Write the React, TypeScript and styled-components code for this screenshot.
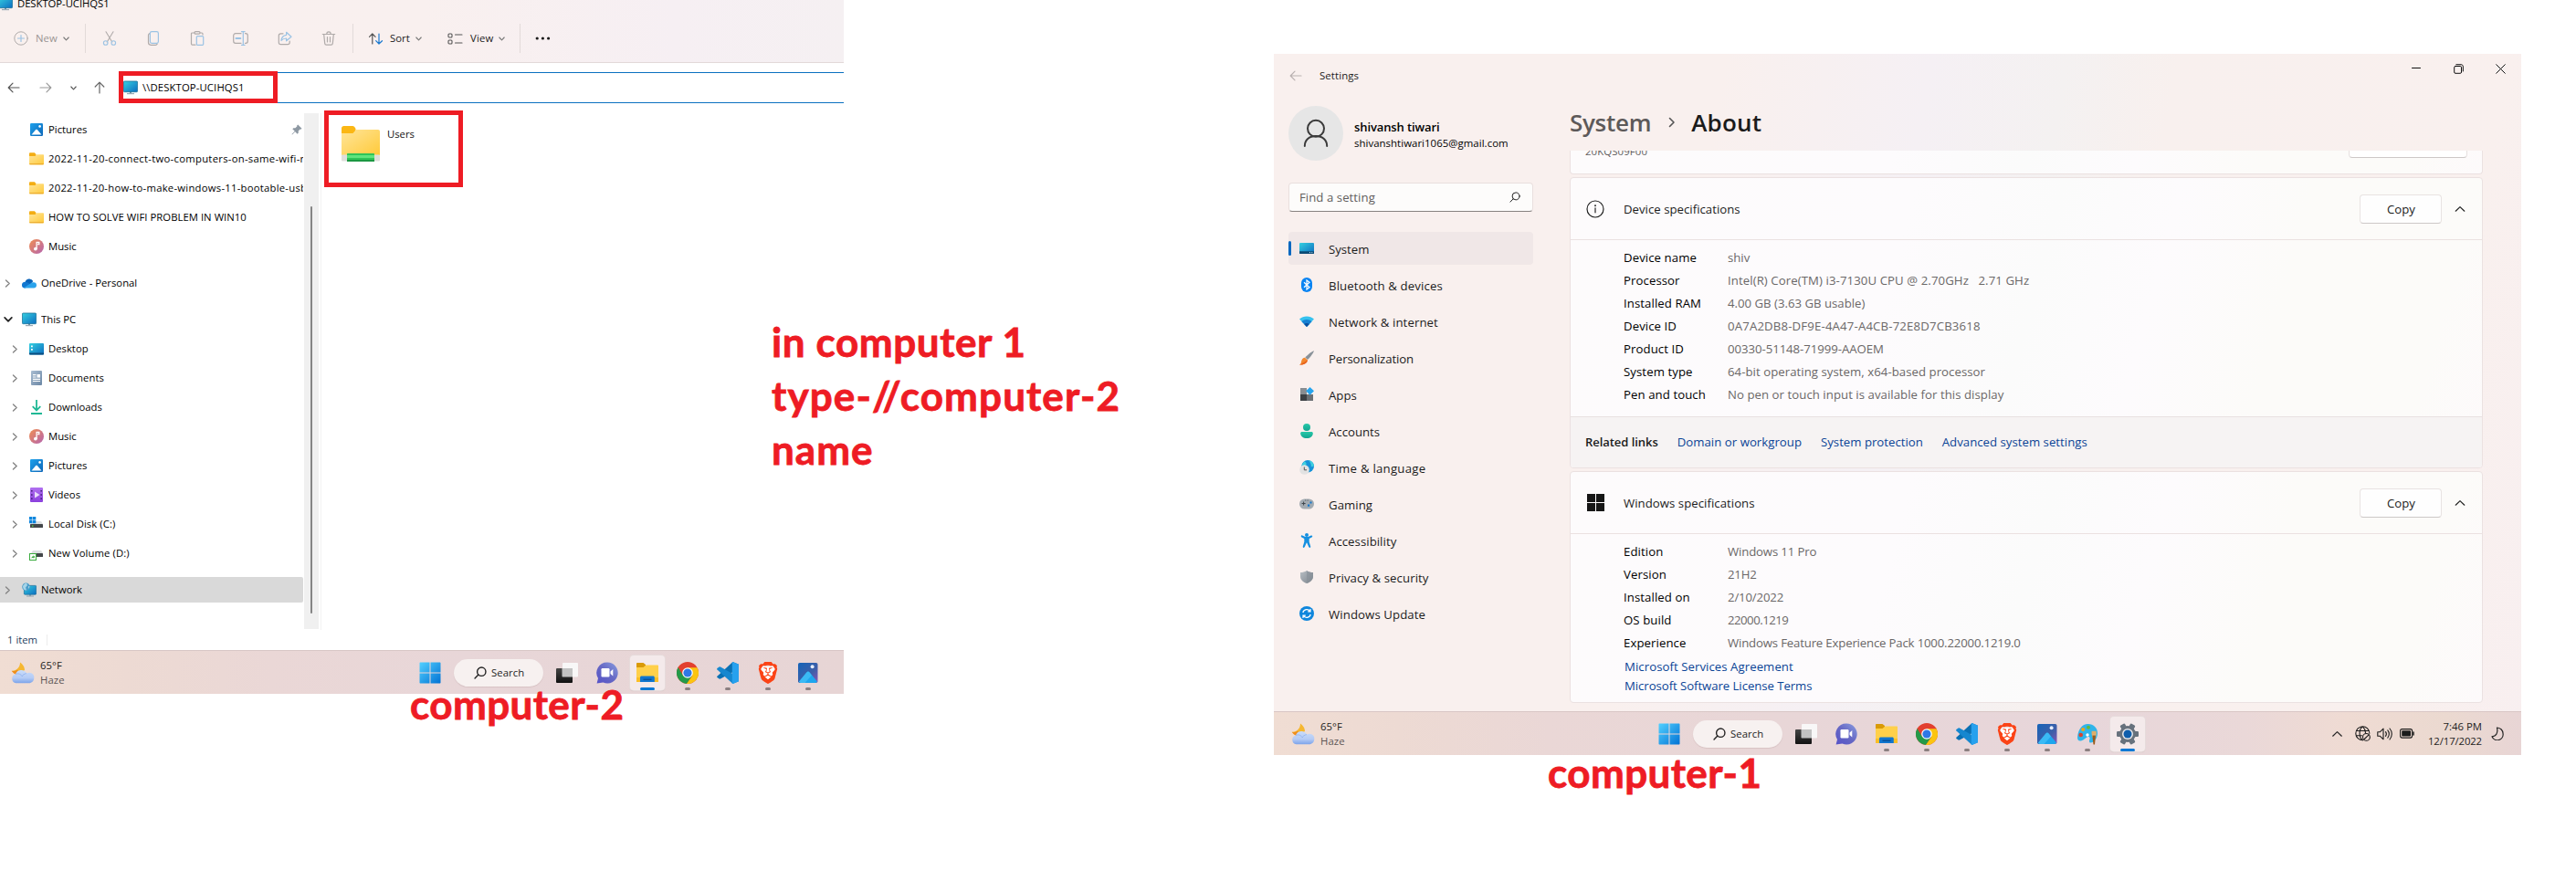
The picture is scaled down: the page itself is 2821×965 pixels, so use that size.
import React from "react";
import styled, { createGlobalStyle } from "styled-components";
import { SiBrave } from "react-icons/si";

const Global = createGlobalStyle`
  *, *::before, *::after { box-sizing: border-box; }
  body { margin: 0; background: #fff; overflow: hidden; }
`;

const Page = styled.main`
  position: relative;
  display: flex;
  align-items: flex-start;
  width: 2821px;
  height: 965px;
  overflow: hidden;
  background: #fff;
  font-family: "Open Sans", "Noto Sans", sans-serif;
  font-size: 11.3px;
  line-height: 16px;
  color: #000;
`;

const Label = styled.span<{ $ls?: number; $color?: string; $ml?: number }>`
  white-space: pre;
  letter-spacing: ${(p) => p.$ls ?? 0}px;
  color: ${(p) => p.$color ?? "inherit"};
  margin-left: ${(p) => p.$ml ?? 0}px;
`;

const Slot = styled.span<{ $w: number; $ml?: number }>`
  display: flex;
  flex: none;
  justify-content: center;
  align-items: center;
  width: ${(p) => p.$w}px;
  margin-left: ${(p) => p.$ml ?? 0}px;
  svg { display: block; flex: none; }
`;

/* ---------- line glyphs ---------- */

type GlyphProps = { w: number; h?: number; box?: string; color?: string; sw?: number; children: React.ReactNode };
function Glyph({ w, h = w, box, color = "#1b1b1b", sw = 1, children }: GlyphProps) {
  return (
    <svg width={w} height={h} viewBox={box ?? `0 0 ${w} ${h}`} fill="none" stroke={color} strokeWidth={sw} strokeLinecap="round" strokeLinejoin="round">
      {children}
    </svg>
  );
}
const ChevronDown = ({ color = "#777", sw = 1.1, s = 7 }) => (
  <Glyph w={s} h={s} box="0 0 7 7" color={color} sw={sw}><path d="M.8 2 3.5 4.8 6.2 2" /></Glyph>
);
const ChevronRight = () => <Glyph w={7} h={9} color="#858585" sw={1.4}><path d="M1.5 1 5.2 4.5 1.5 8" /></Glyph>;
const ChevronUp = ({ w = 12 }) => <Glyph w={w} h={8} box="0 0 12 8" color="#222" sw={1.2}><path d="M1.2 6.2 6 1.6l4.8 4.6" /></Glyph>;
const Arrow = ({ dir, color }: { dir: number; color: string }) => (
  <svg width="14" height="14" viewBox="0 0 14 14" fill="none" stroke={color} strokeWidth="1.2" strokeLinecap="round" strokeLinejoin="round">
    <g transform={`rotate(${dir} 7 7)`}><path d="M1.5 7h11.5M6 2.2 1.2 7 6 11.8" /></g>
  </svg>
);
const Magnifier = ({ s = 12, sw = 1 }) => (
  <Glyph w={s} box="0 0 12 12" color="#222" sw={sw}><circle cx="7.1" cy="4.9" r="4" /><path d="M4.2 7.8.9 11.1" /></Glyph>
);
const gray = "#b0abaa";
const blue = "#9cc3e4";
const CutIcon = () => (
  <Glyph w={16} color={gray} sw={1.1}><path d="M4 .8 10.8 12M12 .8 5.2 12" /><g stroke={blue}><circle cx="3.7" cy="13" r="2.3" /><circle cx="12.3" cy="13" r="2.3" /></g></Glyph>
);
const CopyIcon = () => (
  <Glyph w={16} color={gray} sw={1.2}><path d="M4 2.6c-1 .3-1.5 1-1.5 2v8c0 1.800 1 2.700 2.700 2.700h5c1 0 1.700-.4 2-1.300" /><rect x="4.400" y=".7" width="9" height="12.600" rx="1.800" stroke={blue} /></Glyph>
);
const PasteIcon = () => (
  <Glyph w={16} color={gray} sw={1.2}><path d="M5 2H2.600c-.7 0-1.100.4-1.100 1.100v11c0 .7.4 1.100 1.100 1.100H6M11 2h2c.7 0 1 .4 1 1.100V4" /><rect x="5" y=".7" width="6" height="2.400" rx="1.100" /><rect x="7.300" y="5.600" width="7.400" height="9.700" rx="1" stroke={blue} /></Glyph>
);
const RenameIcon = () => (
  <Glyph w={17} h={16} color={gray} sw={1.2}><path d="M9 2.700H3C1.600 2.700.7 3.600.7 5v6c0 1.400.9 2.300 2.300 2.300h6M13.500 2.700h.5c1.400 0 2.300.9 2.300 2.300v6c0 1.400-.9 2.300-2.300 2.300h-.5" /><path d="M11.300.8v14.400M9.500.7h3.600M9.500 15.300h3.600" stroke={blue} /><path d="M3.500 8h4.800" stroke={blue} strokeWidth="2" /></Glyph>
);
const ShareIcon = () => (
  <Glyph w={16} color={gray} sw={1.2}><path d="M6 2.800H3.500C2.200 2.800 1.300 3.700 1.300 5v7.500c0 1.300.9 2.200 2.200 2.200H11c1.300 0 2.200-.9 2.200-2.200V11" /><path d="M9.600 1.300 15 6.200l-5.400 4.600V8c-2.600 0-4.300.8-5.600 2.500.3-3.300 2.300-5.800 5.600-6.200z" stroke={blue} /></Glyph>
);
const TrashIcon = () => (
  <Glyph w={16} color={gray} sw={1.2}><path d="M1.300 3.500h13.400M5.800 3.300C5.800 1.800 6.700.8 8 .8s2.200 1 2.200 2.500M2.700 3.800l1 9.800c.1 1 .8 1.600 1.700 1.600h5.200c.9 0 1.600-.6 1.700-1.600l1-9.800M6.500 6.500v5.500M9.500 6.500v5.500" /></Glyph>
);
const SortIcon = () => (
  <Glyph w={17} h={13} color="#555" sw={1.2}><path d="M4.800 12V1M1.500 4.300 4.800 1l3.300 3.300" /><path d="M12 1v11M8.700 8.700 12 12l3.500-3.300" stroke="#1b7ad0" /></Glyph>
);
const ViewIcon = () => (
  <Glyph w={17} h={13} color="#555" sw={1.1}><rect x="1" y="1" width="4" height="4" rx="1" /><rect x="1" y="8" width="4" height="4" rx="1" /><path d="M8.500 2h7.500M8.500 11h7.500" /></Glyph>
);

/* ---------- coloured icons ---------- */

const Defs = () => (
  <svg width="0" height="0" style={{ position: "absolute" }} aria-hidden>
    <defs>
      <linearGradient id="screen" x1="0" y1="0" x2="1" y2="1"><stop offset="0" stopColor="#35d0e0" /><stop offset="1" stopColor="#0c6cc0" /></linearGradient>
      <linearGradient id="folder" x1="0" y1="0" x2="1" y2="1"><stop offset="0" stopColor="#ffe59a" /><stop offset="1" stopColor="#ffca3a" /></linearGradient>
      <linearGradient id="sky" x1="0" y1="0" x2="1" y2="1"><stop offset="0" stopColor="#1fa2ec" /><stop offset="1" stopColor="#0c66b8" /></linearGradient>
      <linearGradient id="win" x1="0" y1="0" x2="1" y2="1"><stop offset="0" stopColor="#52d0ff" /><stop offset="1" stopColor="#0272d4" /></linearGradient>
      <linearGradient id="music" x1="0" y1="0" x2="1" y2="1"><stop offset="0" stopColor="#f08e50" /><stop offset="1" stopColor="#b565b0" /></linearGradient>
      <linearGradient id="violet" x1="0" y1="0" x2="0" y2="1"><stop offset="0" stopColor="#b070f0" /><stop offset="1" stopColor="#8a3fdc" /></linearGradient>
      <linearGradient id="doc" x1="0" y1="0" x2="1" y2="1"><stop offset="0" stopColor="#a9bdd2" /><stop offset="1" stopColor="#6b87a5" /></linearGradient>
      <linearGradient id="teal" x1="0" y1="0" x2="0" y2="1"><stop offset="0" stopColor="#28c8a8" /><stop offset="1" stopColor="#12a590" /></linearGradient>
      <linearGradient id="steel" x1="0" y1="0" x2="1" y2="1"><stop offset="0" stopColor="#b9bfc5" /><stop offset="1" stopColor="#7c848c" /></linearGradient>
      <linearGradient id="chat" x1="1" y1="0" x2="0" y2="1"><stop offset="0" stopColor="#8a9de0" /><stop offset=".5" stopColor="#6668c4" /><stop offset="1" stopColor="#5552c8" /></linearGradient>
      <linearGradient id="photo" x1="0" y1="0" x2="1" y2="1"><stop offset="0" stopColor="#1464b8" /><stop offset=".6" stopColor="#3f5ea8" /><stop offset="1" stopColor="#8a55b8" /></linearGradient>
      <linearGradient id="dark" x1="0" y1="0" x2="0" y2="1"><stop offset="0" stopColor="#454545" /><stop offset="1" stopColor="#111" /></linearGradient>
      <linearGradient id="cloud" x1="0" y1="0" x2="0" y2="1"><stop offset="0" stopColor="#c9dcfa" /><stop offset=".6" stopColor="#b4cbf5" /><stop offset="1" stopColor="#7ba3ea" /></linearGradient>
    </defs>
  </svg>
);
const Monitor = () => (
  <svg width="16" height="16" viewBox="0 0 16 16"><path d="M7 12h2v2H7z" fill="#8295a5" /><path d="M4 14h8v1.200H4z" fill="#9aaab5" /><rect x=".4" y="1" width="15.200" height="11.700" rx="1" fill="url(#screen)" stroke="#1c7197" strokeWidth=".8" /></svg>
);
const PicturesIcon = () => (
  <svg width="16" height="16" viewBox="0 0 16 16"><rect x="1" y="1" width="14" height="14" rx="1.200" fill="url(#sky)" /><path d="M2.500 13.500 7 8.300c.6-.6 1.400-.6 2 0l4.500 5.200z" fill="#fff" /><circle cx="11.600" cy="4.400" r="1.300" fill="#fff" /></svg>
);
const FolderIcon = () => (
  <svg width="16" height="14" viewBox="0 0 16 14"><path d="M0 1.500C0 .7.500.3 1.200.3h4.600l1.700 1.600V5H0z" fill="#f3ad13" /><path d="M0 4h6.500l1.500-1.700h7c.6 0 1 .4 1 1v9.200c0 .5-.4.900-1 .9H1c-.6 0-1-.4-1-.9z" fill="url(#folder)" /><path d="M.3 12.700h15.400" stroke="#e5a224" strokeWidth=".9" /></svg>
);
const MusicIcon = () => (
  <svg width="16" height="16" viewBox="0 0 16 16"><circle cx="8" cy="8" r="8" fill="url(#music)" /><circle cx="6.900" cy="10.600" r="1.900" fill="#fff" /><path d="M8.100 10.600V3.400h2.700v2.100H9.200" fill="none" stroke="#fff" strokeWidth="1.300" /></svg>
);
const OneDriveIcon = () => (
  <svg width="16" height="12" viewBox="0 0 16 12"><path d="M3.500 5.500A4.700 4.700 0 0 1 12.300 4L8 9z" fill="#0a63b8" /><path d="M0 8.200A3.300 3.300 0 0 1 3.800 4.700C5.500 4.700 7 6 9 7l-5 4.400H3.200A3.200 3.200 0 0 1 0 8.200z" fill="#1177d0" /><path d="M2 11.200 11 5.500c.5-.2 1-.3 1.600-.3A3.300 3.300 0 0 1 16 8.400c0 1.700-1.300 3-3 3H3.300c-.5 0-.9 0-1.300-.2z" fill="#2aa3ec" /></svg>
);
const DesktopIcon = () => (
  <svg width="16" height="13" viewBox="0 0 16 13"><rect width="16" height="12.400" rx="1" fill="url(#screen)" /><path d="M0 10.500h16v1c0 .6-.4 1-1 1H1c-.6 0-1-.4-1-1z" fill="#0c4f80" /><path d="M2 2.500h1.800v1.800H2zM2 6h1.800v1.800H2z" fill="#fff" /></svg>
);
const DocumentsIcon = () => (
  <svg width="16" height="16" viewBox="0 0 16 16"><rect x="2" width="12" height="16" rx="1" fill="url(#doc)" /><path d="M4 4.600h3.500M4 7h3.500M4 9.400h8M4 11.500h8" stroke="#fff" strokeWidth="1.100" /><rect x="8.500" y="4" width="3.500" height="3.600" fill="#fff" /></svg>
);
const DownloadsIcon = () => (
  <svg width="16" height="16" viewBox="0 0 16 16" fill="none" stroke="#1fb895" strokeWidth="1.800"><path d="M8 0v11M3.700 7.200 8 11.500l4.300-4.300M2 15h12" /></svg>
);
const VideosIcon = () => (
  <svg width="16" height="16" viewBox="0 0 16 16"><rect x="1" width="14" height="16" rx="1" fill="url(#violet)" /><path d="M2 3h1.600v1.600H2zM2 7.200h1.600v1.600H2zM2 11.400h1.600V13H2zM12.400 3H14v1.600h-1.600zM12.400 7.200H14v1.600h-1.600zM12.400 11.400H14V13h-1.600z" fill="#43207a" /><path d="m6 4.500 5.500 3.500L6 11.500z" fill="#eadcfa" /></svg>
);
const DiskIcon = ({ win }: { win?: boolean }) => (
  <svg width="16" height="16" viewBox="0 0 16 16">
    <path d="M4 5h9l2 3H2z" fill="#dcdfe0" /><rect x="1" y="8" width="14" height="4" rx=".6" fill="#43474a" />
    {win ? <><path d="M0 0h3.400v3.400H0zM3.900 0h3.400v3.400H3.900zM0 3.900h3.400v3.400H0zM3.900 3.900h3.400v3.400H3.900z" fill="#0f86dd" /><rect x="3" y="9.500" width="1.500" height="1.300" fill="#59e04f" /></>
      : <><rect x=".5" y="8.500" width="7" height="7" fill="#fff" stroke="#3bab3f" /><path d="m2.200 13.500 1-2h1.300v-1.200L6.400 12l-1.900 1.700v-1z" fill="#3bab3f" /></>}
  </svg>
);
const NetworkIcon = () => (
  <svg width="16" height="16" viewBox="0 0 16 16"><path d="M8 12.500h2v2H8zM5 14.500h8v1H5z" fill="#8ba0ae" /><rect x="2.400" y="3.400" width="13.200" height="9.800" rx=".8" fill="url(#screen)" stroke="#1c6f9b" strokeWidth=".7" /><circle cx="4.500" cy="4.700" r="4.300" fill="#4c9dc9" /><path d="M1 4c1-2 2.500-3.300 4-3.300L6 3 4 5.500l1 3C2.600 8.500 1 7 1 4zM7 4l1.700.6L7.200 7z" fill="#a8d5e8" /></svg>
);
const PinIcon = () => (
  <svg width="12" height="12" viewBox="0 0 12 12" fill="#8d98a2"><path d="m7.200.5 4.300 4.300-1 1-.8-.2-2 2 .1 2-1.100 1.100-2.500-2.500L1 11.500l-.5-.5 3.300-3.200L1.300 5.300l1.100-1.100 2 .1 2-2-.2-.8z" /></svg>
);
const SharedFolder = () => (
  <svg width="42" height="40" viewBox="0 0 42 40"><path d="M0 2.500C0 1 1 0 2.500 0h9.700c1.300 0 2.300 1 3.300 3v8H0z" fill="#fbb714" /><path d="M0 8h12.500l3.500-4h24c1.200 0 2 .8 2 2v26H0z" fill="url(#folder)" /><rect y="31.500" width="42" height="7" rx="1" fill="#dededb" /><rect x="6" y="30" width="30" height="9" rx=".5" fill="#2ec458" /><path d="M6 32h30v3H6z" fill="#5fe47d" /><path d="M6 38h30" stroke="#168a3b" strokeWidth="1.500" /></svg>
);

const StartIcon = () => (
  <svg width="24" height="24" viewBox="0 0 24 24"><path d="M.5 1.500c0-.6.3-1 1-1h10v11H.5zM12.500.5h10c.7 0 1 .4 1 1v10h-11zM.5 12.500h11v11h-10c-.7 0-1-.4-1-1zM12.500 12.500h11v10c0 .6-.3 1-1 1h-10z" fill="url(#win)" /></svg>
);
const TaskViewIcon = () => (
  <svg width="24" height="24" viewBox="0 0 24 24"><rect x="7" y="1" width="17" height="15.500" rx="1" fill="#f8f7f7" /><rect y="7" width="18" height="16" rx="1" fill="url(#dark)" /><path d="M6.500 7H18v9.500H7.500c-.6 0-1-.4-1-1z" fill="#c2c2c2" /></svg>
);
const ChatIcon = () => (
  <svg width="24" height="24" viewBox="0 0 24 24"><path d="M12 .5A11.500 11.500 0 1 1 7.500 22.500L.6 23.500 2 18A11.500 11.500 0 0 1 12 .5z" fill="url(#chat)" /><rect x="5.500" y="7" width="9" height="9.500" rx="1.200" fill="#fff" /><path d="M15.500 10.500 18.300 8v7.500l-2.800-2.500z" fill="#fff" /></svg>
);
const ExplorerIcon = () => (
  <svg width="26" height="24" viewBox="0 0 26 24"><path d="M1 2c0-.7.4-1 1-1h6.500l2.500 2v5H1z" fill="#d99a08" /><path d="M1 6h7.500l3-2.500H24c.6 0 1 .4 1 1V21c0 .6-.4 1-1 1H2c-.6 0-1-.4-1-1z" fill="#ffd04a" /><path d="M1 17h24v5H1z" fill="#fbbf27" /><path d="M5 22v-5c0-1 .6-1.600 1.600-1.600h12.600c1 0 1.600.6 1.600 1.600v5z" fill="#1176cf" /><path d="M8.500 19.300h9" stroke="#0b5199" strokeWidth="1.500" /></svg>
);
const ChromeIcon = () => (
  <svg width="24" height="24" viewBox="0 0 24 24"><circle cx="12" cy="12" r="12" fill="#e2402f" /><path d="M1.600 6a12 12 0 0 0 9.400 18l6-9H7z" fill="#249a49" /><path d="M12 6.300h10.500A12 12 0 0 1 11 24l6.300-9z" fill="#fbc410" /><circle cx="12" cy="12" r="5.800" fill="#fff" /><circle cx="12" cy="12" r="4.600" fill="#2e78e6" /></svg>
);
const CodeIcon = () => (
  <svg width="24" height="24" viewBox="0 0 24 24"><path d="M17.500 0 24 2.800v5L4 18.500l-1 .2-2.600-1.600c-.4-.4-.4-1 0-1.400z" fill="#0a70b3" /><path d="M17.500 24 24 21.200v-4.500L4 5.500l-1-.2L.4 7c-.4.400-.4 1 0 1.400z" fill="#1687cf" /><path d="M17.500 0 24 2.800v18.400L17.500 24l-.7-.4V.4z" fill="#27a1ee" /></svg>
);
const BraveIcon = () => (
  <svg width="22" height="24" viewBox="0 0 22 24"><path d="M4.500 5h13l1 7-3 7.500-4.500 3-4.500-3L3.500 12z" fill="#fff" /><g transform="translate(-1 0)"><SiBrave size={24} color="#fb4316" /></g></svg>
);
const PhotosIcon = () => (
  <svg width="22" height="24" viewBox="0 0 22 24"><rect y="1" width="21.500" height="22" rx="1.800" fill="url(#photo)" /><path d="M1 21.500 9.300 11.500c1.100-1.200 2.200-1.200 3.300 0l8.400 10c-.4.900-1 1.400-2 1.400H3c-1 0-1.700-.5-2-1.400z" fill="#1ea6ee" /><path d="M9.300 11.500c1.100-1.200 2.200-1.200 3.300 0l2.400 3-7.500 8.500H3c-1 0-1.700-.5-2-1.400z" fill="#4cc8fa" opacity=".6" /><circle cx="15.600" cy="5.200" r="2" fill="#e6edfa" /></svg>
);
const PaintIcon = () => (
  <svg width="24" height="24" viewBox="0 0 24 24"><path d="M12.500 1C19 1 23 5.500 23 11c0 6-4 10.500-7.500 10.500-2 0-1.700-2.500-1-4.200.5-1.600-.7-2.600-2.500-2.100-2.500.8-4 4-7.500 4.300-3 .3-3.800-2.200-3.300-5C2 7 6 1 12.500 1z" fill="#2fb4ea" /><circle cx="4.700" cy="13" r="2.300" fill="#d8442e" /><circle cx="7.200" cy="7" r="2.100" fill="#e8a51f" /><circle cx="13" cy="4.800" r="2" fill="#62bb3b" /><circle cx="12" cy="13" r="1.700" fill="#fff" /><path d="M17 10.500h4.500l-.3 5H17z" fill="#e2c38d" /><path d="M17.300 13.500h3.700L20 23.500h-1.500z" fill="#9a5b1c" /><path d="M16.600 8.800h5v4h-5z" fill="#dfae6a" /></svg>
);
const GearIcon = () => (
  <svg width="24" height="24" viewBox="0 0 24 24"><g fill="#67727d"><circle cx="12" cy="12" r="9" />{[30, 90, 150].map((a) => <rect key={a} x="9" y="0" width="6" height="24" rx="1.200" transform={`rotate(${a} 12 12)`} />)}</g><circle cx="12" cy="12" r="6" fill="#e9e7e8" /><circle cx="12" cy="12" r="4.500" fill="#0f5eac" /></svg>
);
const WeatherIcon = () => (
  <svg width="26" height="24" viewBox="0 0 26 24"><path d="M10 .5c2.500 2 5 4.500 5 8.500L8 13.500C4 13 2 11.500.8 9.700 6 10 10 6 10 .5z" fill="#f5b731" /><path d="M.8 9.700C3 10.300 5 10 7 8.500L9 12l-3 2c-2.500-1-4-2.500-5.200-4.300z" fill="#ef8e1e" /><path d="M5.500 23.300A5 5 0 0 1 5 13.500 6.500 6.500 0 0 1 17 12.600a5.400 5.400 0 0 1 8.300 5.200c-.3 3.200-2.400 5.500-5.800 5.500z" fill="url(#cloud)" /><path d="M5 13.500c3-1.500 6 0 7.500 2.500M17 12.600c-2.500.5-4 1.500-5 3.400" fill="none" stroke="#8fb0ec" strokeWidth=".8" /></svg>
);

/* ---------- taskbar ---------- */

const Bar = styled.footer<{ $pad: number; $bg: string }>`
  display: flex;
  flex: none;
  align-items: center;
  height: 48px;
  padding-left: ${(p) => p.$pad}px;
  border-top: 1px solid #d8c6c5;
  background: ${(p) => p.$bg};
  font-size: 11.3px;
`;
const Weather = styled.div<{ $w: number }>`
  display: flex;
  align-items: center;
  gap: 6px;
  width: ${(p) => p.$w}px;
`;
const Stack = styled.div<{ $right?: boolean }>`
  display: flex;
  flex-direction: column;
  align-items: ${(p) => (p.$right ? "flex-end" : "flex-start")};
  color: #1c1c1c;
`;
const SearchPill = styled.div`
  display: flex;
  align-items: center;
  gap: 5px;
  width: 98px;
  height: 30px;
  margin: 0 4px 0 14px;
  padding-left: 22px;
  border-radius: 15px;
  background: #f7f1f0;
  box-shadow: 0 1px 1px rgba(120, 90, 90, 0.15);
  color: #222;
`;
const TaskButton = styled.div<{ $active?: boolean }>`
  position: relative;
  display: flex;
  flex: none;
  align-items: center;
  justify-content: center;
  width: 38px;
  height: 38px;
  margin: 0 3px;
  border-radius: 4px;
  background: ${(p) => (p.$active ? "#f4eaeb" : "transparent")};
  box-shadow: ${(p) => (p.$active ? "0 0 0 1px #e6dbdb, 0 1px 1px #cbbcbc" : "none")};
`;
const Running = styled.i<{ $active?: boolean }>`
  position: absolute;
  left: 50%;
  bottom: 0;
  width: ${(p) => (p.$active ? 16 : 6)}px;
  height: 3px;
  border-radius: 2px;
  transform: translateX(-50%);
  background: ${(p) => (p.$active ? "#0a78d4" : "#8b7f80")};
`;
const Tray = styled.div`
  display: flex;
  align-items: center;
  margin-left: auto;
  padding-right: 19px;
`;

type Task = [React.FC, ("run" | "active")?];
function TaskGroup({ tasks }: { tasks: Task[] }) {
  return (
    <>
      <Slot $w={24}><StartIcon /></Slot>
      <SearchPill>
        <Magnifier s={14} sw={1.2} />
        <Label $ls={0.1}>Search</Label>
      </SearchPill>
      {tasks.map(([Icon, state], i) => (
        <TaskButton key={i} $active={state === "active"}>
          <Icon />
          {state && <Running $active={state === "active"} />}
        </TaskButton>
      ))}
    </>
  );
}
function WeatherWidget({ w }: { w: number }) {
  return (
    <Weather $w={w}>
      <WeatherIcon />
      <Stack><Label $ls={0.1}>65°F</Label><Label $color="#5d5655" $ls={0.1}>Haze</Label></Stack>
    </Weather>
  );
}

/* ---------- explorer window ---------- */

const Explorer = styled.section`
  display: flex;
  flex: none;
  flex-direction: column;
  width: 924px;
  height: 760px;
  overflow: hidden;
  background: #fff;
`;
const Ribbon = styled.header`
  height: 69px;
  flex: none;
  border-bottom: 1px solid #e2d9d9;
  background: linear-gradient(90deg, #f9f0ee 0%, #f9f0ef 50%, #f6eff3 80%, #f5f0f2 100%);
`;
const Caption = styled.div`
  display: flex;
  align-items: center;
  height: 23px;
  margin: -8px 0 0 -2px;
`;
const Commands = styled.div`
  display: flex;
  align-items: center;
  height: 54px;
  padding-left: 15px;
  color: #1b1b1b;
`;
const Divider = styled.i<{ $ml: number }>`
  width: 1px;
  height: 32px;
  margin-left: ${(p) => p.$ml}px;
  background: #e2dad9;
`;
const NavRow = styled.div`
  display: flex;
  flex: none;
  align-items: center;
  height: 55px;
  padding: 0 0 1px 8px;
`;
const Address = styled.div`
  display: flex;
  flex: 1;
  align-items: center;
  height: 34px;
  margin-left: 14px;
  padding-left: 5px;
  border: 1px solid #0a70c0;
  border-right: 0;
`;
const Panes = styled.div`
  display: flex;
  height: 566px;
  flex: none;
`;
const Tree = styled.nav`
  width: 332px;
  padding-top: 2px;
  overflow: hidden;
`;
const TreeRow = styled.div<{ $level: number; $gap?: boolean; $on?: boolean }>`
  display: flex;
  align-items: center;
  height: ${(p) => (p.$on ? 28 : 32)}px;
  margin-top: ${(p) => (p.$on ? 10 : p.$gap ? 8 : 0)}px;
  padding-left: ${(p) => (p.$level ? 12 : 4)}px;
  border-radius: 0 2px 2px 0;
  background: ${(p) => (p.$on ? "#d9d9d9" : "transparent")};
`;
const RowText = styled(Label)`
  flex: 1;
  overflow: hidden;
`;
const Track = styled.div`
  width: 16px;
  height: 565px;
  margin-left: 1px;
  padding: 102px 0 0 7px;
  background: #f0f0f0;
  &::before {
    content: "";
    display: block;
    width: 2px;
    height: 446px;
    border-radius: 1px;
    background: #858585;
  }
`;
const Files = styled.div`
  flex: 1;
  margin-left: 2px;
  padding: 14px 0 0 22px;
  border-left: 1px solid #f2f2f2;
`;
const FileTile = styled.div`
  display: flex;
  align-items: flex-start;
  gap: 8px;
  span { margin-top: 1px; }
`;
const StatusBar = styled.div`
  display: flex;
  align-items: center;
  height: 22px;
  padding-left: 8px;
  color: #24405e;
`;
const StatusMark = styled.i`
  width: 1px;
  height: 12px;
  margin-left: 10px;
  background: #ececec;
`;

type Row = { text: string; icon: React.FC; level?: number; exp?: "r" | "d"; gap?: boolean; on?: boolean; ls?: number; pin?: boolean };
const CDisk = () => <DiskIcon win />;
const DDisk = () => <DiskIcon />;
const rows: Row[] = [
  { text: "Pictures", icon: PicturesIcon, level: 1, pin: true },
  { text: "2022-11-20-connect-two-computers-on-same-wifi-n", icon: FolderIcon, level: 1, ls: 0.27 },
  { text: "2022-11-20-how-to-make-windows-11-bootable-usb", icon: FolderIcon, level: 1, ls: 0.24 },
  { text: "HOW TO SOLVE WIFI PROBLEM IN WIN10", icon: FolderIcon, level: 1, ls: 0.04 },
  { text: "Music", icon: MusicIcon, level: 1 },
  { text: "OneDrive - Personal", icon: OneDriveIcon, exp: "r", gap: true },
  { text: "This PC", icon: Monitor, exp: "d", gap: true },
  { text: "Desktop", icon: DesktopIcon, level: 1, exp: "r" },
  { text: "Documents", icon: DocumentsIcon, level: 1, exp: "r", ls: 0.05 },
  { text: "Downloads", icon: DownloadsIcon, level: 1, exp: "r" },
  { text: "Music", icon: MusicIcon, level: 1, exp: "r" },
  { text: "Pictures", icon: PicturesIcon, level: 1, exp: "r" },
  { text: "Videos", icon: VideosIcon, level: 1, exp: "r" },
  { text: "Local Disk (C:)", icon: CDisk, level: 1, exp: "r", ls: 0.08 },
  { text: "New Volume (D:)", icon: DDisk, level: 1, exp: "r", ls: 0.08 },
  { text: "Network", icon: NetworkIcon, exp: "r", on: true },
];

function ExplorerWindow() {
  return (
    <Explorer>
      <Ribbon>
        <Caption>
          <Slot $w={16}><Monitor /></Slot>
          <Label $ml={5} $ls={-0.05}>DESKTOP-UCIHQS1</Label>
        </Caption>
        <Commands>
          <Slot $w={16}><Glyph w={16} color={gray}><circle cx="8" cy="8" r="7.200" /><path d="M8 4.500v7M4.500 8h7" stroke={blue} strokeWidth="1.200" /></Glyph></Slot>
          <Label $ml={8} $color="#9a9493" $ls={0.1}>New</Label>
          <Slot $w={8} $ml={6}><ChevronDown /></Slot>
          <Divider $ml={16} />
          <Slot $w={16} $ml={18}><CutIcon /></Slot>
          <Slot $w={16} $ml={32}><CopyIcon /></Slot>
          <Slot $w={16} $ml={32}><PasteIcon /></Slot>
          <Slot $w={16} $ml={32}><RenameIcon /></Slot>
          <Slot $w={16} $ml={32}><ShareIcon /></Slot>
          <Slot $w={16} $ml={32}><TrashIcon /></Slot>
          <Divider $ml={18} />
          <Slot $w={17} $ml={16}><SortIcon /></Slot>
          <Label $ml={7} $ls={0.1}>Sort</Label>
          <Slot $w={8} $ml={6}><ChevronDown /></Slot>
          <Slot $w={17} $ml={27}><ViewIcon /></Slot>
          <Label $ml={8} $ls={0.2}>View</Label>
          <Slot $w={8} $ml={5}><ChevronDown /></Slot>
          <Divider $ml={16} />
          <Slot $w={18} $ml={15}><svg width="17" height="4" fill="#1b1b1b"><circle cx="2.200" cy="2" r="1.600" /><circle cx="8.400" cy="2" r="1.600" /><circle cx="14.600" cy="2" r="1.600" /></svg></Slot>
        </Commands>
      </Ribbon>
      <NavRow>
        <Slot $w={14}><Arrow dir={0} color="#555" /></Slot>
        <Slot $w={14} $ml={21}><Arrow dir={180} color="#9a9a9a" /></Slot>
        <Slot $w={8} $ml={19}><ChevronDown color="#555" /></Slot>
        <Slot $w={14} $ml={18}><Arrow dir={90} color="#666" /></Slot>
        <Address>
          <Slot $w={16} $ml={-1}><Monitor /></Slot>
          <Label $ml={5} $ls={0.12}>{"\\\\DESKTOP-UCIHQS1"}</Label>
        </Address>
      </NavRow>
      <Panes>
        <Tree>
          {rows.map((r, i) => {
            const Icon = r.icon;
            return (
              <TreeRow key={i} $level={r.level ?? 0} $gap={r.gap} $on={r.on}>
                <Slot $w={9}>{r.exp === "r" ? <ChevronRight /> : r.exp === "d" ? <ChevronDown color="#222" sw={1.2} s={10} /> : null}</Slot>
                <Slot $w={16} $ml={11}><Icon /></Slot>
                <RowText $ml={5} $ls={r.ls ?? 0}>{r.text}</RowText>
                {r.pin && <Slot $w={14}><PinIcon /></Slot>}
              </TreeRow>
            );
          })}
        </Tree>
        <Track />
        <Files>
          <FileTile><SharedFolder /><Label $color="#111">Users</Label></FileTile>
        </Files>
      </Panes>
      <StatusBar><Label>1 item</Label><StatusMark /></StatusBar>
      <Bar $pad={12} $bg="linear-gradient(90deg, #f0ddd3 0%, #eddad3 15%, #ead7d6 32%, #e8d6d8 55%, #e7d5d5 100%)">
        <WeatherWidget w={447} />
        <TaskGroup tasks={[[TaskViewIcon], [ChatIcon], [ExplorerIcon, "active"], [ChromeIcon, "run"], [CodeIcon, "run"], [BraveIcon, "run"], [PhotosIcon, "run"]]} />
      </Bar>
    </Explorer>
  );
}

/* ---------- settings window ---------- */

const Settings = styled.section`
  display: flex;
  flex: none;
  flex-direction: column;
  width: 1366px;
  height: 768px;
  margin: 59px 0 0 471px;
  overflow: hidden;
  background: linear-gradient(100deg, #f9f0ee 0%, #f9f0ee 33%, #f5f0f4 48%, #f4f1f1 58%, #f8f0ee 66%, #f9f0ee 90%, #f8eff0 100%);
  font-size: 13.2px;
  color: #1b1b1b;
`;
const TitleBar = styled.header`
  display: flex;
  flex: none;
  height: 48px;
  padding-left: 17px;
  font-size: 11.4px;
  align-items: center;
`;
const WindowControls = styled.div`
  display: flex;
  align-self: flex-start;
  align-items: center;
  height: 32px;
  margin-left: auto;
`;
const Body = styled.div`
  display: flex;
  height: 672px;
  flex: none;
`;
const Side = styled.aside`
  width: 284px;
  margin-left: 16px;
  padding-top: 9px;
`;
const Profile = styled.div`
  display: flex;
  align-items: center;
  gap: 12px;
  height: 60px;
`;
const Avatar = styled.div`
  display: flex;
  align-items: center;
  justify-content: center;
  width: 60px;
  height: 60px;
  border-radius: 50%;
  background: #e6e6e6;
`;
const ProfileText = styled.div`
  display: flex;
  flex-direction: column;
  gap: 2px;
  padding-top: 4px;
  color: #000;
  b { font-weight: 600; font-size: 13px; letter-spacing: -0.1px; }
  span { font-size: 11.4px; }
`;
const SearchBox = styled.div`
  display: flex;
  align-items: center;
  justify-content: space-between;
  width: 268px;
  height: 32px;
  margin: 24px 0 22px;
  padding: 0 13px 0 11px;
  border: 1px solid #e9dfde;
  border-bottom: 1px solid #888281;
  border-radius: 4px;
  background: #fdfcfb;
  color: #625e5d;
`;
const Item = styled.div<{ $on?: boolean }>`
  display: flex;
  align-items: center;
  width: 268px;
  height: 36px;
  margin-bottom: 4px;
  border-radius: 4px;
  background: ${(p) => (p.$on ? "#f0e7e7" : "transparent")};
  &::before {
    content: "";
    width: 3px;
    height: 16px;
    border-radius: 2px;
    background: ${(p) => (p.$on ? "#0067c0" : "transparent")};
  }
`;
const ItemText = styled(Label)`
  padding-top: 2px;
`;
const Main = styled.div`
  display: flex;
  flex-direction: column;
  width: 1000px;
  margin-left: 24px;
`;
const Crumbs = styled.h1`
  display: flex;
  align-items: center;
  height: 58px;
  margin: 0;
  padding-bottom: 5px;
  font-size: 26px;
  line-height: 36px;
  font-weight: 600;
`;
const Scroller = styled.div`
  display: flex;
  flex-direction: column;
  justify-content: flex-start;
  height: 614px;
  overflow: hidden;
`;
const Card = styled.article<{ $h: number; $cut?: boolean }>`
  flex: none;
  height: ${(p) => p.$h}px;
  margin-bottom: 3px;
  border: 1px solid #ebe1e1;
  border-top-width: ${(p) => (p.$cut ? 0 : 1)}px;
  border-radius: ${(p) => (p.$cut ? "0 0 4px 4px" : "4px")};
  background: linear-gradient(105deg, #fdfbfc 0%, #fdfbfd 35%, #fbfbfb 50%, #fdfbfd 62%, #fcfbf9 75%, #fcfbf9 92%, #fdfafb 100%);
  overflow: hidden;
`;
const CutContent = styled.div`
  display: flex;
  justify-content: space-between;
  margin-top: -7px;
  padding: 0 16px 0 16px;
  font-size: 11.4px;
  color: #625e5e;
`;
const CutButton = styled.div`
  width: 130px;
  height: 15px;
  border: 1px solid #e6e0df;
  border-bottom-color: #cdc8c7;
  border-radius: 4px;
  background: #fff;
`;
const CardHead = styled.div`
  display: flex;
  align-items: center;
  height: 68px;
  padding: 0 18px 0 17px;
  border-bottom: 1px solid #ebe1e1;
`;
const CopyButton = styled.button`
  width: 90px;
  height: 32px;
  margin: 0 14px 0 auto;
  padding: 0 0 0 1px;
  border: 1px solid #e8e3e2;
  border-bottom-color: #cdc8c7;
  border-radius: 4px;
  background: #fefefe;
  font: 13.2px "Open Sans", sans-serif;
  color: #1b1b1b;
`;
const Specs = styled.dl`
  display: grid;
  grid-template-columns: 114px 1fr;
  grid-auto-rows: 25px;
  align-items: center;
  margin: 0;
  padding: 6px 0 0 58px;
  color: #000;
`;
const Value = styled(Label).attrs({ as: "dd" })`
  margin: 0;
  color: #6a6767;
`;
const Related = styled.div`
  display: flex;
  align-items: center;
  gap: 21px;
  height: 57px;
  margin-top: 12px;
  padding: 0 0 3px 16px;
  border-top: 1px solid #e8e1e1;
  background: #f6f3f3;
  color: #0b4496;
  b { font-weight: 600; font-size: 13px; color: #1b1b1b; letter-spacing: -0.05px; }
`;
const Terms = styled.div`
  display: flex;
  flex-direction: column;
  padding: 4px 0 0 59px;
  line-height: 21px;
  color: #0b4496;
`;

const navIcons: [string, React.ReactNode, number?][] = [
  ["System", <svg width="16" height="12" viewBox="0 0 16 12"><rect width="16" height="12" rx="1" fill="url(#screen)" /><path d="M0 9.200h16V11c0 .6-.4 1-1 1H1c-.6 0-1-.4-1-1z" fill="#0b4a75" /><path d="M11 10.600h1M13.300 10.600h1" stroke="#bfe3f2" /></svg>],
  ["Bluetooth & devices", <svg width="12" height="16" viewBox="0 0 12 16"><rect width="12" height="16" rx="6" fill="#0a84f2" /><path d="m3 5.200 6 5.500L6 13V3l3 2.300-6 5.500" fill="none" stroke="#fff" strokeWidth="1.200" /></svg>, 0.12],
  ["Network & internet", <svg width="16" height="12" viewBox="0 0 16 12"><path d="M0 3.500C4.500-.6 11.500-.6 16 3.500L8 12z" fill="#36c2ef" /><path d="M2.500 6.200C5.500 3.300 10.500 3.300 13.500 6.200L8 12z" fill="#1680d2" /><path d="M5.200 9c1.500-1.500 4.100-1.500 5.600 0L8 12z" fill="#0b4e9c" /></svg>, 0.1],
  ["Personalization", <svg width="16" height="16" viewBox="0 0 16 16"><path d="M15.800.3c.5.600-3.300 6.500-6.800 9.700L6.300 7.500C9.500 4 15 0 15.800.3z" fill="#8a9299" /><path d="M6 7.800 8.700 10.300c.3 2.700-2.700 5.700-8.700 5.200 2-.7 1.700-2 2.200-4 .5-2.300 2-3.500 3.800-3.700z" fill="#f2882e" /><path d="M5 13c1-.5 2.500-1.500 3.500-3l.2.300c.3 2.700-2.700 5.700-8.700 5.200 1.500-.5 3-1.200 5-2.500z" fill="#e8601c" /></svg>, -0.1],
  ["Apps", <svg width="16" height="16" viewBox="0 0 16 16"><path d="M1 1h7v7H1z" fill="#888d92" /><path d="M1 8h7v7H1z" fill="#3d4145" /><path d="M8 8h7v7H8z" fill="#6b7075" /><path d="m11.500 0 4.500 4.300-4.500 4.400L7.200 4.300z" fill="#26a4ee" /></svg>],
  ["Accounts", <svg width="14" height="16" viewBox="0 0 14 16"><circle cx="7" cy="4" r="4" fill="url(#teal)" /><path d="M1.800 9h10.400c1 0 1.600.6 1.600 1.500C13.800 14 11 16 7 16S.2 14 .2 10.500C.2 9.600.8 9 1.800 9z" fill="url(#teal)" /></svg>],
  ["Time & language", <svg width="16" height="16" viewBox="0 0 16 16"><circle cx="9.200" cy="6.800" r="6.800" fill="#1793d8" /><path d="M6 1.500C8 3 8 5 6.500 7H3C2.500 4.500 4 2.500 6 1.500zM10 .2c2 2 3 4 2.800 7l3-.5C15.700 3 13 .5 10 .2z" fill="#3fd0df" /><circle cx="5.500" cy="10.500" r="5.300" fill="#e2e2e2" /><path d="M5.300 7.500v3.300H8" fill="none" stroke="#555" /></svg>, 0.25],
  ["Gaming", <svg width="16" height="12" viewBox="0 0 16 12"><rect y=".5" width="16" height="11" rx="5.500" fill="#a3abb2" /><path d="M4.600 3.500v4M2.600 5.500h4" stroke="#3e454b" /><path d="M9 6.500h2.200v2.200H9zM11.500 3.500h2v2h-2z" fill="#1477cc" /><path d="M6.200 2h1M8.600 2h1" stroke="#4c545a" /></svg>, 0.05],
  ["Accessibility", <svg width="14" height="16" viewBox="0 0 14 16" fill="#1690e0"><circle cx="7" cy="2" r="2" /><path d="M.8 3c.2-.6.8-.8 1.400-.5L5.500 4h3l3.300-1.500c.6-.3 1.200 0 1.400.5.2.6 0 1.100-.6 1.400L9.700 6v3.500l1.500 5c.2.600-.1 1.200-.7 1.400-.6.1-1.100-.2-1.300-.8L7.200 10.500h-.4L4.800 15.100c-.2.600-.7.900-1.300.8-.6-.2-.9-.8-.7-1.400l1.500-5V6L1.400 4.400C.8 4.100.6 3.600.8 3z" /></svg>, 0.05],
  ["Privacy & security", <svg width="14" height="14" viewBox="0 0 14 14"><path d="M7 0c2 1.500 4.500 2 7 2v4.500c0 3.500-3 6.200-7 7.500-4-1.300-7-4-7-7.500V2c2.500 0 5-.5 7-2z" fill="url(#steel)" /><path d="M7 0c2 1.500 4.500 2 7 2v4.500c0 3.500-3 6.200-7 7.500z" fill="#878f97" opacity=".6" /></svg>, 0.08],
  ["Windows Update", <svg width="16" height="16" viewBox="0 0 16 16"><circle cx="8" cy="8" r="8" fill="#0f86dc" /><path d="M3.800 7A4.400 4.400 0 0 1 11.800 5.700M12.200 9a4.400 4.400 0 0 1-8 1.300M12 3v2.900H9.200M4 13v-2.900h2.800" fill="none" stroke="#fff" strokeWidth="1.200" /></svg>, 0.1],
];

const device: [string, string, number][] = [
  ["Device name", "shiv", 0],
  ["Processor", "Intel(R) Core(TM) i3-7130U CPU @ 2.70GHz   2.71 GHz", 0.09],
  ["Installed RAM", "4.00 GB (3.63 GB usable)", 0],
  ["Device ID", "0A7A2DB8-DF9E-4A47-A4CB-72E8D7CB3618", 0.16],
  ["Product ID", "00330-51148-71999-AAOEM", -0.05],
  ["System type", "64-bit operating system, x64-based processor", 0.05],
  ["Pen and touch", "No pen or touch input is available for this display", 0.05],
];
const windows: [string, string, number][] = [
  ["Edition", "Windows 11 Pro", -0.15],
  ["Version", "21H2", -0.2],
  ["Installed on", "2/10/2022", -0.15],
  ["OS build", "22000.1219", -0.5],
  ["Experience", "Windows Feature Experience Pack 1000.22000.1219.0", -0.17],
];
function SpecList({ data }: { data: [string, string, number][] }) {
  return (
    <Specs>
      {data.map(([k, v, ls]) => (
        <React.Fragment key={k}>
          <Label as="dt" $ls={0.08}>{k}</Label>
          <Value $ls={ls}>{v}</Value>
        </React.Fragment>
      ))}
    </Specs>
  );
}

function SettingsWindow() {
  return (
    <Settings>
      <TitleBar>
        <Slot $w={14}><Arrow dir={0} color="#b9b1b0" /></Slot>
        <Label $ml={19} $ls={0.1}>Settings</Label>
        <WindowControls>
          <Slot $w={46}><Glyph w={10} color="#111"><path d="M.5 4.500h9" /></Glyph></Slot>
          <Slot $w={46}><Glyph w={11} color="#111"><rect x=".7" y="2.500" width="7.800" height="7.800" rx="1.300" /><path d="M2.800.7h5.400c1.200 0 2.100.9 2.100 2.100v5.200" /></Glyph></Slot>
          <Slot $w={46}><Glyph w={11} color="#111"><path d="m.7.7 9.600 9.600M10.300.7.7 10.300" /></Glyph></Slot>
        </WindowControls>
      </TitleBar>
      <Body>
        <Side>
          <Profile>
            <Avatar><Glyph w={28} h={32} color="#3a3a3a" sw={2}><circle cx="14" cy="10.800" r="9" /><path d="M1.800 30c0-6.500 5-11 12.200-11s12.200 4.500 12.200 11" /></Glyph></Avatar>
            <ProfileText><b>shivansh tiwari</b><Label $ls={0.05}>shivanshtiwari1065@gmail.com</Label></ProfileText>
          </Profile>
          <SearchBox><Label $ls={0.05}>Find a setting</Label><Magnifier /></SearchBox>
          {navIcons.map(([text, icon, ls], i) => (
            <Item key={text} $on={i === 0}>
              <Slot $w={18} $ml={8}>{icon}</Slot>
              <ItemText $ml={15} $ls={ls ?? 0}>{text}</ItemText>
            </Item>
          ))}
        </Side>
        <Main>
          <Crumbs>
            <Label $color="#5d5959" $ls={-0.3}>System</Label>
            <Slot $w={10} $ml={18}><Glyph w={8} h={12} color="#555" sw={1.6}><path d="M1.500 1.500 6 6 1.500 10.500" /></Glyph></Slot>
            <Label $ml={16} $ls={0.2}>About</Label>
          </Crumbs>
          <Scroller>
            <Card $h={26} $cut>
              <CutContent><Label $ls={0.1}>20KQS09F00</Label><CutButton /></CutContent>
            </Card>
            <Card $h={319}>
              <CardHead>
                <Slot $w={20}><Glyph w={20} color="#222" sw={1.2}><circle cx="10" cy="10" r="9" /><path d="M10 8.800v5" /><circle cx="10" cy="6.200" r=".4" /></Glyph></Slot>
                <Label $ml={21} $ls={0.02}>Device specifications</Label>
                <CopyButton>Copy</CopyButton>
                <ChevronUp />
              </CardHead>
              <SpecList data={device} />
              <Related>
                <b>Related links</b>
                <Label $ls={0.03}>Domain or workgroup</Label>
                <Label>System protection</Label>
                <Label $ls={0.02}>Advanced system settings</Label>
              </Related>
            </Card>
            <Card $h={254}>
              <CardHead>
                <Slot $w={20}><svg width="19" height="19" fill="#161616"><path d="M0 0h9v9H0zM10 0h9v9h-9zM0 10h9v9H0zM10 10h9v9h-9z" /></svg></Slot>
                <Label $ml={21} $ls={0.04}>Windows specifications</Label>
                <CopyButton>Copy</CopyButton>
                <ChevronUp />
              </CardHead>
              <SpecList data={windows} />
              <Terms><Label $ls={0.06}>Microsoft Services Agreement</Label><Label $ls={-0.06}>Microsoft Software License Terms</Label></Terms>
            </Card>
          </Scroller>
        </Main>
      </Body>
      <Bar $pad={19} $bg="linear-gradient(90deg, #f0ddd3 0%, #eddad3 10%, #ead7d6 22%, #e8d6d7 40%, #e7d6da 65%, #ead8d8 78%, #efdbd3 86%, #ebd9d0 94%, #e8d5d5 100%)">
        <WeatherWidget w={402} />
        <TaskGroup tasks={[[TaskViewIcon], [ChatIcon], [ExplorerIcon, "run"], [ChromeIcon, "run"], [CodeIcon, "run"], [BraveIcon, "run"], [PhotosIcon, "run"], [PaintIcon, "run"], [GearIcon, "active"]]} />
        <Tray>
          <Slot $w={12}><ChevronUp w={13} /></Slot>
          <Slot $w={17} $ml={14}><Glyph w={17} color="#1b1b1b" sw={1.1}><path d="M8.500 15.800a7.500 7.500 0 1 1 7.300-7.500M1.500 5.500h13.800M1.300 10.800h6.200M8.300 15.800C4 12.500 4 4 8.300.8 10.300 2.500 11.300 5 11.500 7.500" /><circle cx="12.400" cy="12.400" r="3.900" /><path d="m9.800 15 5.200-5.200" /></Glyph></Slot>
          <Slot $w={17} $ml={7}><Glyph w={17} h={14} color="#1b1b1b" sw={1.1}><path d="M.8 4.800h2.400L7 1.200v11.600L3.200 9.200H.8zM9.500 4.700c1 1.300 1 3.300 0 4.600M11.800 2.900c2 2.300 2 5.900 0 8.200M14 1c3 3.300 3 8.700 0 12" /></Glyph></Slot>
          <Slot $w={16} $ml={8}><svg width="16" height="11" viewBox="0 0 16 11"><rect x=".6" y=".6" width="13" height="9.500" rx="2" fill="none" stroke="#1b1b1b" strokeWidth="1.100" /><rect x="2.200" y="2.200" width="9.800" height="6.300" rx=".8" fill="#1b1b1b" /><path d="M15 4v3" stroke="#1b1b1b" strokeWidth="1.500" strokeLinecap="round" /></svg></Slot>
          <Slot $w={59} $ml={15}><Stack $right><Label $ls={0.05}>7:46 PM</Label><Label $ls={-0.1}>12/17/2022</Label></Stack></Slot>
          <Slot $w={14} $ml={10}><Glyph w={14} h={15} color="#222" sw={1.2}><path d="M6.500 1c3.800.2 6.600 3 6.600 6.700A6.300 6.300 0 0 1 1 10.800C5.500 10.800 7.800 6.800 6.500 1z" /></Glyph></Slot>
        </Tray>
      </Bar>
    </Settings>
  );
}

/* ---------- annotations over the screens ---------- */

const Mark = styled.div<{ $x: number; $y: number; $w: number; $h: number }>`
  position: absolute;
  left: ${(p) => p.$x}px;
  top: ${(p) => p.$y}px;
  width: ${(p) => p.$w}px;
  height: ${(p) => p.$h}px;
  border: 5px solid #ee1c24;
`;
const Note = styled.div<{ $x: number; $y: number }>`
  position: absolute;
  left: ${(p) => p.$x}px;
  top: ${(p) => p.$y}px;
  display: flex;
  flex-direction: column;
  font: 700 44px/59px Lato, sans-serif;
  -webkit-text-stroke: 0.8px #ee1c24;
  color: #ee1c24;
`;

export default function App() {
  return (
    <Page>
      <Global />
      <Defs />
      <ExplorerWindow />
      <SettingsWindow />
      <Mark $x={130} $y={78} $w={174} $h={35} />
      <Mark $x={355} $y={121} $w={152} $h={84} />
      <Note $x={449} $y={742}><Label $ls={0.4}>computer-2</Label></Note>
      <Note $x={1695} $y={817}><Label $ls={0.4}>computer-1</Label></Note>
      <Note $x={845} $y={345}>
        <Label $ls={0.6}>in computer 1</Label>
        <Label $ls={1.1}>type-//computer-2</Label>
        <Label $ls={1}>name</Label>
      </Note>
    </Page>
  );
}
